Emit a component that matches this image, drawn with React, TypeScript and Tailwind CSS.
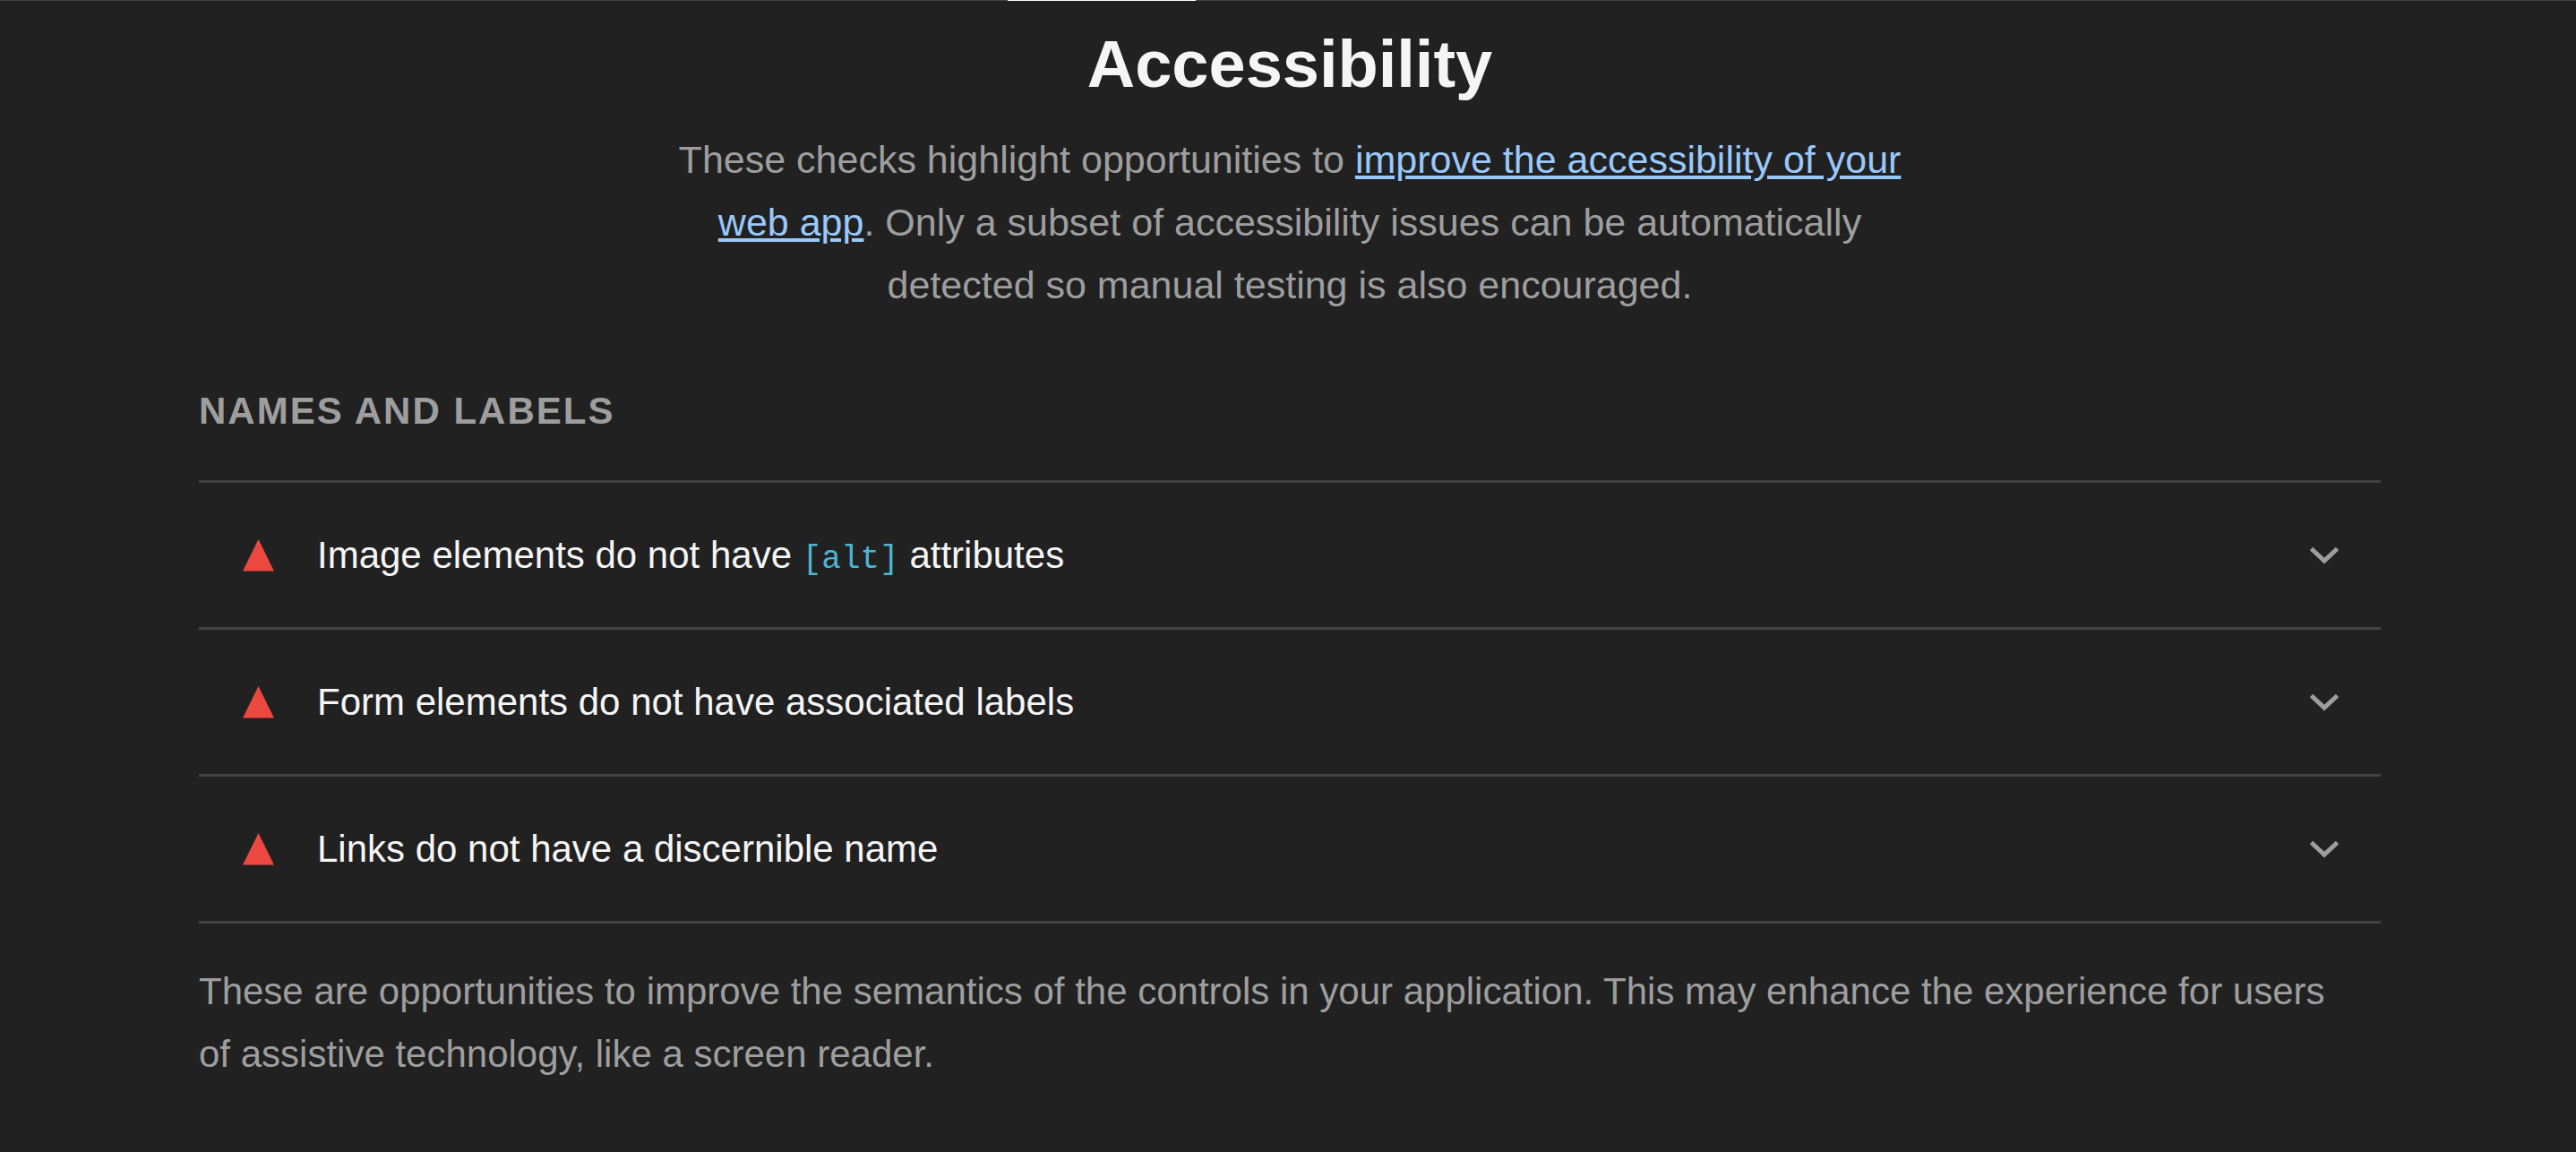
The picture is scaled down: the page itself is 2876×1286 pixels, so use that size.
const audits = [
  { before: 'Image elements do not have ', code: '[alt]', after: ' attributes' },
  { before: 'Form elements do not have associated labels' },
  { before: 'Links do not have a discernible name' },
];

export default function App() {
  return (
    <div className="min-h-screen bg-[#212121] font-['Liberation_Sans',Arial,sans-serif] text-[42px] leading-[70px] text-[#9e9e9e]">
      <div className="h-px bg-[#424242] pl-[1125px]">
        <div className="h-px w-[210px] bg-white" />
      </div>
      <main className="pr-[218px] pb-14 pl-[222px]">
        <header className="text-center">
          <h1 className="pt-[23px] text-[74px] leading-[96px] font-bold text-[#f5f5f5]">Accessibility</h1>
          <p className="mx-auto mt-[23px] max-w-[1400px] text-[43px]">
            These checks highlight opportunities to{' '}
            <a href="#accessibility" className="text-[#99c8fa] underline decoration-4 underline-offset-3">improve the accessibility of your web app</a>. Only a subset of
            accessibility issues can be automatically detected so manual testing is also encouraged.
          </p>
        </header>
        <section>
          <h2 className="mt-[71px] font-bold tracking-[2px] uppercase">Names and labels</h2>
          <ul className="mt-[42px] border-b-3 border-[#424242] text-[#f5f5f5]">
            {audits.map((audit) => (
              <li key={audit.before} className="border-t-3 border-[#424242]">
                <button type="button" className="flex min-h-[161px] w-full items-center pr-[46px] pl-12 text-left">
                  <svg className="h-9 w-9 shrink-0" viewBox="0 0 36 36" aria-hidden="true">
                    <path d="M18.5 0L36 35.5H1z" fill="#eb493f" />
                  </svg>
                  <span className="ml-12 grow">
                    {audit.before}
                    {audit.code && <code className="font-['Liberation_Mono',monospace] text-[36px] leading-none text-[#4db6d3]">{audit.code}</code>}
                    {audit.after}
                  </span>
                  <svg className="h-5 w-[34px] shrink-0" viewBox="0 0 34 20" aria-hidden="true">
                    <path d="M2.5 2.5L17 16L31.5 2.5" fill="none" stroke="#9e9e9e" strokeWidth="5" />
                  </svg>
                </button>
              </li>
            ))}
          </ul>
          <p className="mt-[41px] pr-10">
            These are opportunities to improve the semantics of the controls in your application. This may enhance the experience for users of
            assistive technology, like a screen reader.
          </p>
        </section>
      </main>
    </div>
  );
}
